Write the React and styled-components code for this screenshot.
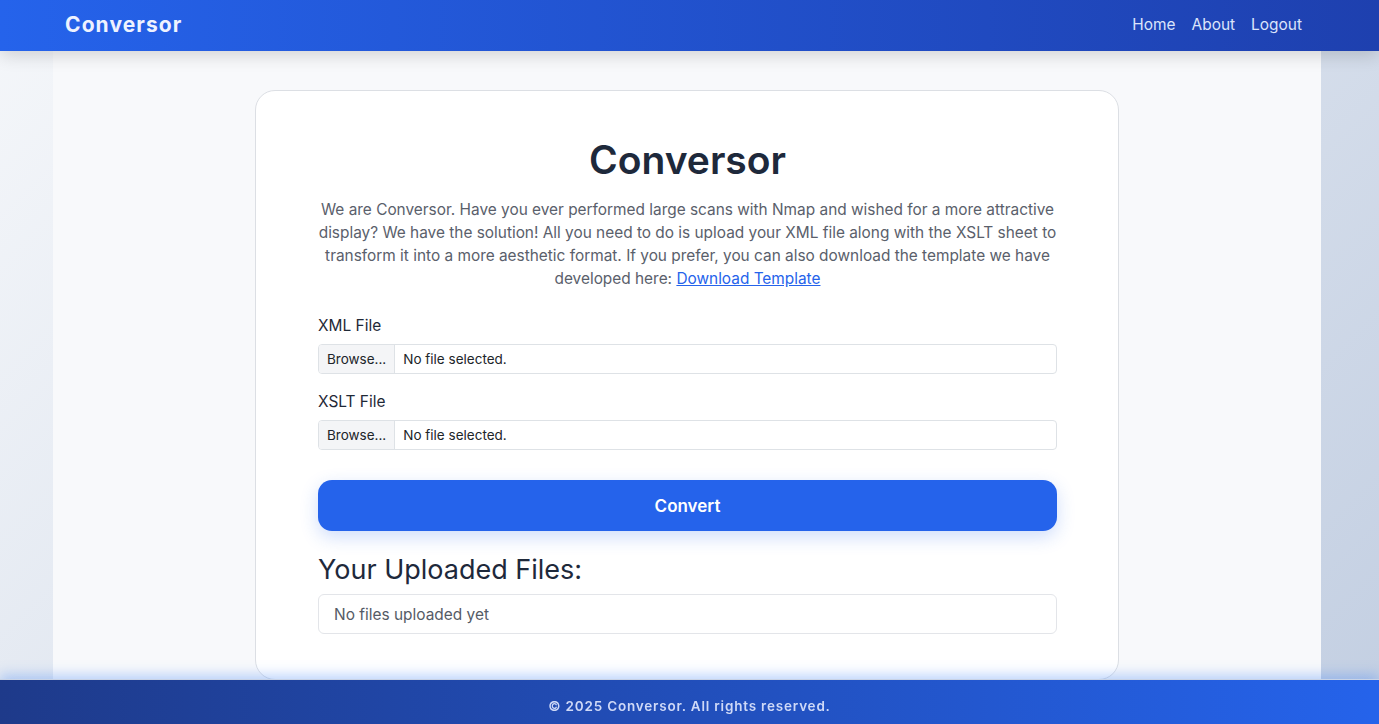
import styled, { createGlobalStyle } from 'styled-components';

const GlobalStyle = createGlobalStyle`
  html, body {
    margin: 0;
    padding: 0;
    height: 100%;
  }
  body {
    font-family: Inter, "Noto Sans", "Liberation Sans", sans-serif;
    background: linear-gradient(135deg, #f5f7fa 0%, #c3cfe2 100%);
    background-attachment: fixed;
    overflow: hidden;
  }
  * {
    box-sizing: border-box;
  }
`;

const Page = styled.div`
  display: flex;
  flex-direction: column;
  height: 100vh;
`;

const Header = styled.header`
  position: relative;
  z-index: 2;
  display: flex;
  justify-content: space-between;
  align-items: center;
  height: 51px;
  padding: 0 77px 3px 65px;
  background: linear-gradient(90deg, #2563eb 0%, #1e40af 100%);
  box-shadow: 0 4px 18px rgba(0, 0, 0, 0.16);
`;

const Logo = styled.div`
  font-size: 21px;
  font-weight: 700;
  letter-spacing: 1.1px;
  color: #eef2ff;
`;

const Nav = styled.nav`
  display: flex;
  gap: 16px;
  a {
    color: #dbe4fb;
    text-decoration: none;
    font-size: 15.45px;
  }
`;

const Main = styled.main`
  flex: 1;
  width: 1268px;
  margin-left: 53px;
  padding-top: 39px;
  background: #f8f9fb;
  overflow: hidden;
`;

const Card = styled.section`
  width: 864px;
  margin: 0 auto;
  padding: 39px 61px 45px 62px;
  background: #fff;
  border: 1px solid #dcdfe4;
  border-radius: 20px;
`;

const Title = styled.h1`
  margin: 0;
  text-align: center;
  font-size: 39px;
  line-height: 60px;
  font-weight: 600;
  color: #1e293b;
`;

const Intro = styled.p`
  margin: 8px -1px 0;
  text-align: center;
  font-size: 15.4px;
  line-height: 23px;
  color: #5a606b;
  a {
    color: #2563eb;
    text-decoration: underline;
  }
`;

const Field = styled.div`
  margin-top: ${(p) => p.$top}px;
`;

const Label = styled.label`
  display: block;
  font-size: 15.45px;
  line-height: 20px;
  color: #1f2937;
  margin-bottom: 8px;
`;

const FileBox = styled.div`
  display: flex;
  align-items: stretch;
  height: 30px;
  border: 1px solid #dee2e6;
  border-radius: 4px;
  overflow: hidden;
  font-size: 13.5px;
  color: #212529;
`;

const Browse = styled.span`
  display: flex;
  align-items: center;
  padding: 0 8px;
  background: #f4f5f7;
  border-right: 1px solid #dee2e6;
`;

const FileName = styled.span`
  display: flex;
  align-items: center;
  padding: 0 8px;
`;

const ConvertButton = styled.button`
  display: block;
  width: 100%;
  height: 51px;
  margin-top: 30px;
  border: none;
  border-radius: 14px;
  background: #2563eb;
  color: #fff;
  font-family: inherit;
  font-size: 17px;
  font-weight: 600;
  box-shadow: 0 6px 18px rgba(37, 99, 235, 0.22);
  cursor: pointer;
`;

const SubTitle = styled.h2`
  margin: 21px 0 6px;
  font-size: 27px;
  line-height: 36px;
  font-weight: 400;
  color: #1e293b;
`;

const FileList = styled.div`
  height: 40px;
  display: flex;
  align-items: center;
  padding: 0 15px;
  border: 1px solid #e3e5e9;
  border-radius: 6px;
  font-size: 15.45px;
  color: #555b66;
`;

const Footer = styled.footer`
  position: fixed;
  left: 0;
  right: 0;
  bottom: 0;
  z-index: 3;
  height: 45px;
  display: flex;
  align-items: center;
  justify-content: center;
  padding-top: 7px;
  background: linear-gradient(90deg, #1e3a8a 0%, #2563eb 100%);
  box-shadow: 0 -4px 12px rgba(59, 130, 246, 0.35);
  border-top: 1px solid #c9d3e6;
  color: #cfd9f7;
  font-size: 13.5px;
  font-weight: 600;
  letter-spacing: 0.8px;
`;

const FileInput = ({ label, top }) => (
  <Field $top={top}>
    <Label>{label}</Label>
    <FileBox>
      <Browse>Browse...</Browse>
      <FileName>No file selected.</FileName>
    </FileBox>
  </Field>
);

const App = () => (
  <Page>
    <GlobalStyle />
    <Header>
      <Logo>Conversor</Logo>
      <Nav>
        <a href='#'>Home</a>
        <a href='#'>About</a>
        <a href='#'>Logout</a>
      </Nav>
    </Header>
    <Main>
      <Card>
        <Title>Conversor</Title>
        <Intro>
          We are Conversor. Have you ever performed large scans with Nmap and wished for a more
          attractive display? We have the solution! All you need to do is upload your XML file
          along with the XSLT sheet to transform it into a more aesthetic format. If you prefer,
          you can also download the template we have developed here:{' '}
          <a href='#'>Download Template</a>
        </Intro>
        <FileInput label='XML File' top={26} />
        <FileInput label='XSLT File' top={18} />
        <ConvertButton type='button'>Convert</ConvertButton>
        <SubTitle>Your Uploaded Files:</SubTitle>
        <FileList>No files uploaded yet</FileList>
      </Card>
    </Main>
    <Footer>© 2025 Conversor. All rights reserved.</Footer>
  </Page>
);

export default App;
